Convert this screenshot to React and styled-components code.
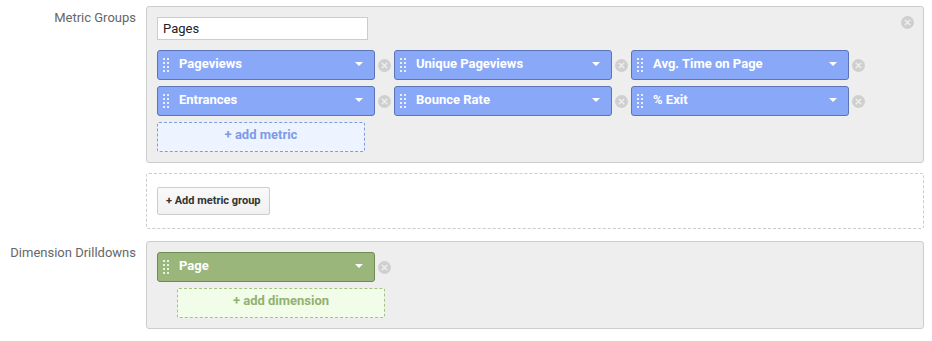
import React from "react";
import styled, { createGlobalStyle } from "styled-components";

const GlobalStyle = createGlobalStyle`
  html, body { margin: 0; padding: 0; background: #fff; }
  body { font-family: Roboto, "Liberation Sans", Arial, sans-serif; }
  * { box-sizing: border-box; }
`;

const Page = styled.div`
  display: grid;
  grid-template-columns: 136px 778px;
  column-gap: 10px;
  padding-top: 6px;
`;

const Label = styled.div`
  text-align: right;
  color: #666;
  font-size: 13px;
  line-height: 16px;
  padding-top: 4px;
  white-space: nowrap;
`;

const Panel = styled.div`
  position: relative;
  border: 1px ${(p) => (p.$dashed ? "dashed" : "solid")} #ccc;
  background: ${(p) => (p.$dashed ? "#fff" : "#eee")};
  border-radius: 3px;
  padding: ${(p) => (p.$dashed ? "13px 10px" : "10px")};
  margin-bottom: ${(p) => p.$mb || 0}px;
`;

const NameInput = styled.div`
  width: 211px;
  height: 23px;
  border: 1px solid #ccc;
  background: #fff;
  font-size: 13px;
  color: #222;
  line-height: 21px;
  padding-left: 5px;
  margin-bottom: 10px;
`;

const PillGrid = styled.div`
  display: flex;
  flex-wrap: wrap;
  row-gap: 6px;
  width: 711px;
`;

const Item = styled.div`
  display: flex;
  align-items: center;
  width: 237px;
`;

const Pill = styled.div`
  width: 218px;
  height: 30px;
  border-radius: 3px;
  border: 1px solid ${(p) => (p.$green ? "#6f8a55" : "#5b74b7")};
  background: ${(p) => (p.$green ? "#9bb67a" : "#8aa8f8")};
  color: #fff;
  display: flex;
  align-items: center;
  padding: 0 11px 4px 5px;
  font-size: 13px;
  font-weight: 700;
`;

const Handle = styled.div`
  display: grid;
  grid-template-columns: repeat(2, 2px);
  grid-template-rows: repeat(4, 2px);
  column-gap: 2px;
  row-gap: 2px;
  margin-right: 10px;
  margin-top: 4px;
  span {
    width: 2px;
    height: 2px;
    background: rgba(255, 255, 255, 0.8);
  }
`;

const PillText = styled.span`
  flex: 1;
  white-space: nowrap;
`;

const Caret = styled.span`
  width: 0;
  height: 0;
  border-left: 4px solid transparent;
  border-right: 4px solid transparent;
  border-top: 4px solid #fff;
  margin-top: 2px;
`;

const CloseZone = styled.div`
  width: 19px;
  display: flex;
  justify-content: center;
`;

const TopClose = styled.div`
  position: absolute;
  top: 9px;
  right: 9px;
  line-height: 0;
`;

const AddBox = styled.div`
  width: 208px;
  height: 30px;
  margin-top: 6px;
  margin-left: ${(p) => p.$indent || 0}px;
  border: 1px dashed ${(p) => (p.$green ? "#a4c186" : "#7d9be8")};
  background: ${(p) => (p.$green ? "#f1fce9" : "#eef4ff")};
  color: ${(p) => (p.$green ? "#93b16f" : "#7d9be8")};
  border-radius: 2px;
  font-size: 13px;
  font-weight: 700;
  display: flex;
  align-items: center;
  justify-content: center;
  padding-bottom: 5px;
`;

const Button = styled.div`
  display: inline-flex;
  align-items: center;
  height: 28px;
  padding: 0 8px 1px;
  border: 1px solid #ccc;
  border-radius: 2px;
  background: linear-gradient(#f9f9f9, #f1f1f1);
  color: #333;
  font-size: 11px;
  font-weight: 700;
`;

const CloseIcon = () => (
  <svg width="13" height="13" viewBox="0 0 13 13">
    <circle cx="6.5" cy="6.5" r="6.5" fill="#cfcfcf" />
    <path d="M4.2 4.2 L8.8 8.8 M8.8 4.2 L4.2 8.8" stroke="#eee" strokeWidth="1.4" strokeLinecap="round" />
  </svg>
);

const DragHandle = () => (
  <Handle>
    {Array.from({ length: 8 }).map((_, i) => (
      <span key={i} />
    ))}
  </Handle>
);

const PillItem = ({ label, green }) => (
  <Item>
    <Pill $green={green}>
      <DragHandle />
      <PillText>{label}</PillText>
      <Caret />
    </Pill>
    <CloseZone>
      <CloseIcon />
    </CloseZone>
  </Item>
);

const metrics = ["Pageviews", "Unique Pageviews", "Avg. Time on Page", "Entrances", "Bounce Rate", "% Exit"];

export default function App() {
  return (
    <>
      <GlobalStyle />
      <Page>
        <Label>Metric Groups</Label>
        <Panel $mb={10}>
          <TopClose>
            <CloseIcon />
          </TopClose>
          <NameInput>Pages</NameInput>
          <PillGrid>
            {metrics.map((m) => (
              <PillItem key={m} label={m} />
            ))}
          </PillGrid>
          <AddBox>+ add metric</AddBox>
        </Panel>

        <Label />
        <Panel $dashed $mb={12}>
          <Button>+ Add metric group</Button>
        </Panel>

        <Label>Dimension Drilldowns</Label>
        <Panel>
          <PillGrid>
            <PillItem label="Page" green />
          </PillGrid>
          <AddBox $green $indent={20}>+ add dimension</AddBox>
        </Panel>
      </Page>
    </>
  );
}
